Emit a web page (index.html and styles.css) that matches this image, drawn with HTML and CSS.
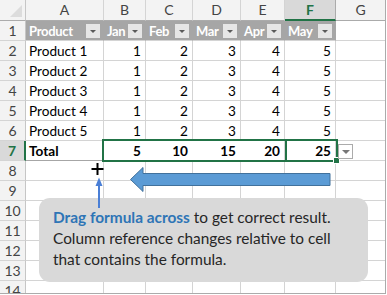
FILE: index.html
```html
<!DOCTYPE html>
<html>
<head>
<meta charset="utf-8">
<link rel="stylesheet" href="styles.css">
</head>
<body>
<div class="sheet">
  <div class="grid">
    <div class="corner"><span class="tri"></span></div>
    <div class="ch">A</div><div class="ch">B</div><div class="ch">C</div><div class="ch">D</div><div class="ch">E</div><div class="ch ch-sel">F</div><div class="ch ch-last">G</div>

    <div class="rh">1</div>
    <div class="th">Product<span class="fb"></span></div>
    <div class="th">Jan<span class="fb"></span></div>
    <div class="th">Feb<span class="fb"></span></div>
    <div class="th">Mar<span class="fb"></span></div>
    <div class="th">Apr<span class="fb"></span></div>
    <div class="th">May<span class="fb"></span></div>
    <div class="c last"></div>

    <div class="rh">2</div><div class="c">Product 1</div><div class="c n">1</div><div class="c n">2</div><div class="c n">3</div><div class="c n">4</div><div class="c n">5</div><div class="c last"></div>
    <div class="rh">3</div><div class="c">Product 2</div><div class="c n">1</div><div class="c n">2</div><div class="c n">3</div><div class="c n">4</div><div class="c n">5</div><div class="c last"></div>
    <div class="rh">4</div><div class="c">Product 3</div><div class="c n">1</div><div class="c n">2</div><div class="c n">3</div><div class="c n">4</div><div class="c n">5</div><div class="c last"></div>
    <div class="rh">5</div><div class="c">Product 4</div><div class="c n">1</div><div class="c n">2</div><div class="c n">3</div><div class="c n">4</div><div class="c n">5</div><div class="c last"></div>
    <div class="rh">6</div><div class="c">Product 5</div><div class="c n">1</div><div class="c n">2</div><div class="c n">3</div><div class="c n">4</div><div class="c n">5</div><div class="c last"></div>

    <div class="rh rh-sel">7</div>
    <div class="c tot">Total</div>
    <div class="c n b nv">5</div><div class="c n b nv">10</div><div class="c n b nv">15</div><div class="c n b">20</div><div class="c n b">25</div><div class="c last"></div>

    <div class="rh">8</div><div class="c"></div><div class="c"></div><div class="c"></div><div class="c"></div><div class="c"></div><div class="c"></div><div class="c last"></div>
    <div class="rh">9</div><div class="c"></div><div class="c"></div><div class="c"></div><div class="c"></div><div class="c"></div><div class="c"></div><div class="c last"></div>
    <div class="rh">10</div><div class="c"></div><div class="c"></div><div class="c"></div><div class="c"></div><div class="c"></div><div class="c"></div><div class="c last"></div>
    <div class="rh">11</div><div class="c"></div><div class="c"></div><div class="c"></div><div class="c"></div><div class="c"></div><div class="c"></div><div class="c last"></div>
    <div class="rh">12</div><div class="c"></div><div class="c"></div><div class="c"></div><div class="c"></div><div class="c"></div><div class="c"></div><div class="c last"></div>
    <div class="rh">13</div><div class="c"></div><div class="c"></div><div class="c"></div><div class="c"></div><div class="c"></div><div class="c"></div><div class="c last"></div>
    <div class="rh">14</div><div class="c"></div><div class="c"></div><div class="c"></div><div class="c"></div><div class="c"></div><div class="c"></div><div class="c last"></div>
  </div>

  <div class="selection"><span class="sel-split"></span><span class="handle"></span></div>
  <div class="qa"><span class="qa-tri"></span></div>

  <svg class="arrows" width="386" height="294" viewBox="0 0 386 294">
    <polygon points="130.5,179.5 143,167.5 143,173.5 330,173.5 330,185.5 143,185.5 143,191.5" fill="#5b9bd5" stroke="#41719c" stroke-width="1"/>
    <rect x="91.5" y="168" width="12" height="2" fill="#000"/>
    <rect x="96.5" y="163" width="2" height="12" fill="#000"/>
  </svg>

  <div class="callout">
    <span class="hl">Drag formula across</span> to get correct result.<br>Column reference changes relative to cell<br>that contains the formula.
  </div>

  <svg class="uparrow" width="386" height="294" viewBox="0 0 386 294">
    <rect x="98" y="184" width="2" height="24" fill="#4a7fd6"/>
    <polygon points="99,177.5 95.5,186 102.5,186" fill="#4a7fd6"/>
  </svg>
</div>
</body>
</html>
```

FILE: styles.css
```css
html, body {
  margin: 0;
  padding: 0;
  background: #fff;
}

.sheet {
  position: relative;
  width: 386px;
  height: 294px;
  box-sizing: border-box;
  border-right: 1px solid #ababab;
  border-bottom: 1px solid #ababab;
  overflow: hidden;
  font-family: Lato, "Liberation Sans", sans-serif;
  font-size: 13.6px;
  color: #000;
}

.grid {
  display: grid;
  grid-template-columns: 26px 78px 42px 47px 48px 44px 51px 1fr;
  grid-template-rows: 21px repeat(14, 20px);
}

.grid > div {
  box-sizing: border-box;
  line-height: 20px;
  white-space: nowrap;
  overflow: hidden;
}

.corner {
  position: relative;
  background: #f3f3f3;
  border-right: 1px solid #c6c6c6;
  border-bottom: 1px solid #ababab;
}

.tri {
  position: absolute;
  right: 3px;
  bottom: 3px;
  width: 0;
  height: 0;
  border-left: 12px solid transparent;
  border-bottom: 12px solid #dcdcdc;
}

.ch {
  background: #f3f3f3;
  border-right: 1px solid #d4d4d4;
  border-bottom: 1px solid #ababab;
  text-align: center;
  color: #444;
  font-size: 14px;
}

.ch-sel {
  background: #d9d9d9;
  color: #217346;
  font-weight: bold;
  border-bottom: 2px solid #217346;
  border-right-color: #ababab;
}

.ch-last {
  border-right: none;
}

.rh {
  background: #f3f3f3;
  border-right: 1px solid #c6c6c6;
  border-bottom: 1px solid #d4d4d4;
  text-align: center;
  color: #444;
  font-size: 14px;
}

.rh-sel {
  background: #d9d9d9;
  color: #217346;
  font-weight: bold;
  border-right: 2px solid #217346;
}

.c {
  border-right: 1px solid #d4d4d4;
  border-bottom: 1px solid #d4d4d4;
  padding: 0 3px;
}

.c.last {
  border-right: none;
}

.n {
  text-align: right;
  padding-right: 4px;
}

.b {
  font-weight: bold;
}

.nv {
  border-right-color: #fff;
}

.tot {
  font-weight: bold;
  border-bottom-color: #a6a6a6;
}

.th {
  position: relative;
  background: #a6a6a6;
  color: #fff;
  font-weight: bold;
  font-size: 13px;
  padding: 0 3px;
  border-right: 1px solid #a6a6a6;
  border-bottom: 1px solid #d4d4d4;
  letter-spacing: -0.3px;
}

.fb {
  position: absolute;
  right: 3px;
  top: 3px;
  width: 14px;
  height: 14px;
  background: #e6e6e6;
}

.fb::after {
  content: "";
  position: absolute;
  left: 4px;
  top: 6px;
  border-left: 3px solid transparent;
  border-right: 3px solid transparent;
  border-top: 3px solid #5a5a5a;
}

.selection {
  position: absolute;
  left: 102px;
  top: 139px;
  width: 236px;
  height: 23px;
  box-sizing: border-box;
  border: 2px solid #217346;
}

.sel-split {
  position: absolute;
  left: 181px;
  top: 0;
  width: 2px;
  height: 19px;
  background: #217346;
}

.handle {
  position: absolute;
  right: -4px;
  bottom: -4px;
  width: 5px;
  height: 5px;
  background: #217346;
  border: 1px solid #fff;
}

.qa {
  position: absolute;
  left: 338px;
  top: 144px;
  width: 15px;
  height: 15px;
  box-sizing: border-box;
  border: 1px solid #ababab;
  background: #fff;
}

.qa-tri {
  position: absolute;
  left: 3px;
  top: 5px;
  border-left: 4px solid transparent;
  border-right: 4px solid transparent;
  border-top: 4px solid #777;
}

.arrows, .uparrow {
  position: absolute;
  left: 0;
  top: 0;
}

.callout {
  position: absolute;
  left: 39px;
  top: 198px;
  width: 329px;
  height: 84px;
  box-sizing: border-box;
  padding: 9px 8px 0 14px;
  background: #d9d9d9;
  border-radius: 11px;
  font-size: 15.4px;
  line-height: 21px;
  color: #262626;
  white-space: nowrap;
}

.hl {
  color: #2e75b6;
  font-weight: bold;
}
```
